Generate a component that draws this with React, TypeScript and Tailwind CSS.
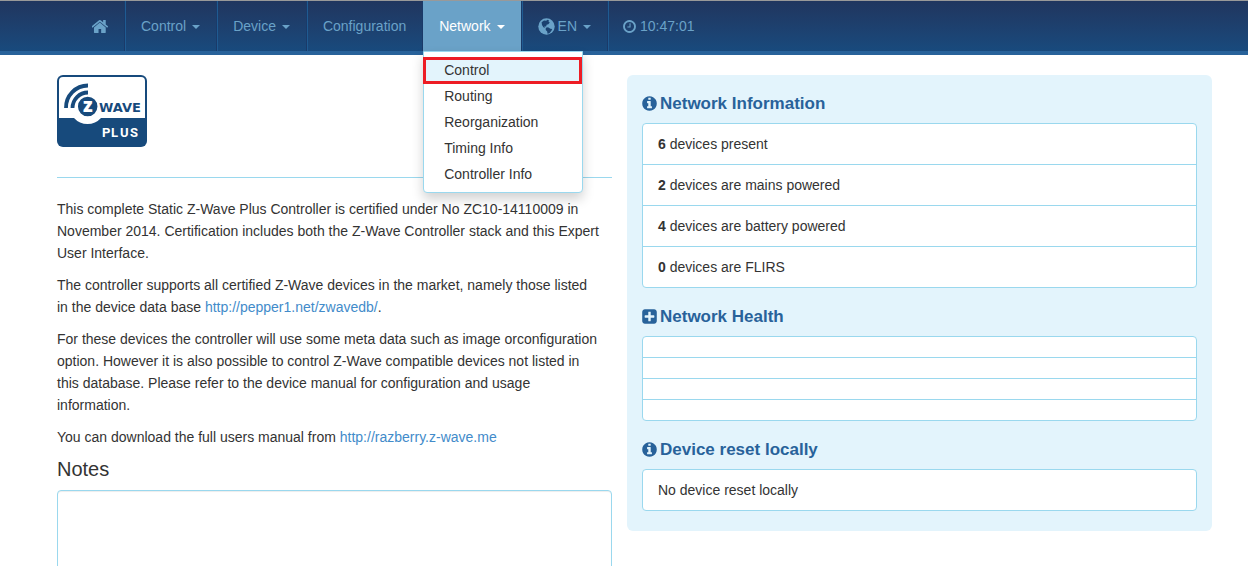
import type { ReactNode } from "react";

const FA_CIRCLE =
  "M1664 896q0 209-103 385.5t-279.5 279.5-385.5 103-385.5-103-279.5-279.5-103-385.5 103-385.5 279.5-279.5 385.5-103 385.5 103 279.5 279.5 103 385.5z";

function Icon({ d, className, viewBox = "128 0 1536 1792" }: { d: string; className: string; viewBox?: string }) {
  return (
    <svg viewBox={viewBox} fill="currentColor" fillRule="evenodd" className={className} aria-hidden="true">
      <path d={d} />
    </svg>
  );
}

const HOME =
  "M1408 992v480q0 26-19 45t-45 19h-384v-384h-256v384h-384q-26 0-45-19t-19-45v-480q0-1 .5-3t.5-3l575-474 575 474q1 2 1 6zm223-69l-62 74q-8 9-21 11h-3q-13 0-21-7l-692-577-692 577q-12 8-24 7-13-2-21-11l-62-74q-8-10-7-23.5t11-21.5l719-599q32-26 76-26t76 26l244 204v-195q0-14 9-23t23-9h192q14 0 23 9t9 23v408l219 182q10 8 11 21.5t-7 23.5z";
const CLOCK =
  "M1024 544v448q0 14-9 23t-23 9h-320q-14 0-23-9t-9-23v-64q0-14 9-23t23-9h224v-352q0-14 9-23t23-9h64q14 0 23 9t9 23zM1440 896q0-148-73-273t-198-198-273-73-273 73-198 198-73 273 73 273 198 198 273 73 273-73 198-198 73-273z" +
  FA_CIRCLE;
const INFO =
  "M1152 1376v-160q0-14-9-23t-23-9h-96v-512q0-14-9-23t-23-9h-320q-14 0-23 9t-9 23v160q0 14 9 23t23 9h96v320h-96q-14 0-23 9t-9 23v160q0 14 9 23t23 9h448q14 0 23-9t9-23zM1024 480v-160q0-14-9-23t-23-9h-192q-14 0-23 9t-9 23v160q0 14 9 23t23 9h192q14 0 23-9t9-23z" +
  FA_CIRCLE;
const PLUS =
  "M1408 960v-128q0-26-19-45t-45-19h-320v-320q0-26-19-45t-45-19h-128q-26 0-45 19t-19 45v320h-320q-26 0-45 19t-19 45v128q0 26 19 45t45 19h320v320q0 26 19 45t45 19h128q26 0 45-19t19-45v-320h320q26 0 45-19t19-45zm256-544v960q0 119-84.5 203.5t-203.5 84.5h-960q-119 0-203.5-84.5t-84.5-203.5v-960q0-119 84.5-203.5t203.5-84.5h960q119 0 203.5 84.5t84.5 203.5z";

function Globe() {
  return (
    <svg viewBox="0 0 17 17" className="mr-[3px] size-[17px]" aria-hidden="true">
      <circle cx="8.5" cy="8.5" r="8.2" fill="currentColor" />
      <path
        d="M3.6 4.2L6 2.4l2.200.3 1.200-.9 1.700.7-.6 1.300 1.300.8-1.500 1.600-1.700.6-.5 1.600-1.800.2.6 1.500-1.500-.9-1.400-2.200zM7.800 9.800l2.200-.5 2.400 1.400 1.800.4-.9 2-1.900 2.100-1.900.6-.3-2.200-1.500-1.600z"
        fill="#1b4170"
      />
    </svg>
  );
}

function Caret() {
  return <span className="ml-[6px] mt-[2px] border-x-4 border-t-4 border-x-transparent border-t-current" />;
}

function NavItem({ children, active = false }: { children: ReactNode; active?: boolean }) {
  const base = "flex h-[50px] items-center border-l border-r pl-[15px] pr-4 ";
  const tone = active
    ? "border-l-[#6aa2c8] border-r-[#1a3a69] bg-[#6aa2c8] text-white"
    : "border-l-[#1f5b92] border-r-[#1a3a69] text-[#6aa2c8]";
  return (
    <button type="button" className={base + tone}>
      {children}
    </button>
  );
}

function Logo() {
  return (
    <svg viewBox="0 0 90 72" className="h-[72px] w-[90px]" role="img" aria-label="Z-Wave Plus">
      <rect width="90" height="72" rx="6" fill="#174a7c" />
      <path d="M6 2h78q4 0 4 4v37H44a18 18 0 0 1-27 0H2V6q0-4 4-4z" fill="#fff" />
      <g fill="none" stroke="#174a7c" strokeWidth="3.8">
        <path d="M9 33A22 22 0 0 1 31 10.5" />
        <path d="M15.5 33A15.500 15.500 0 0 1 31 17.500" />
      </g>
      <circle cx="30.7" cy="31.5" r="10.5" fill="#174a7c" stroke="#fff" strokeWidth="1.5" />
      <text x="30.7" y="37" textAnchor="middle" fontSize="19" className="fill-white font-['Open_Sans'] font-extrabold">z</text>
      <text x="42" y="37" fontSize="13" className="fill-[#174a7c] font-['DejaVu_Sans'] font-bold">WAVE</text>
      <text x="45 54 63 73" y="62" fontSize="13" className="fill-white font-['Roboto'] font-bold">PLUS</text>
    </svg>
  );
}

function Section({ icon, title, children }: { icon: string; title: string; children: ReactNode }) {
  return (
    <section>
      <h2 className="mb-[6px] flex h-[26px] items-center gap-[3px] text-[17px] font-bold text-[#28629a]">
        <Icon d={icon} className="mb-[2px] h-[17px] w-[15px]" />
        {title}
      </h2>
      <ul className="mb-4 divide-y divide-[#9ad8ee] rounded border border-[#9ad8ee] bg-white">{children}</ul>
    </section>
  );
}

const DEVICES = [
  ["6", "devices present"],
  ["2", "devices are mains powered"],
  ["4", "devices are battery powered"],
  ["0", "devices are FLIRS"],
];

export default function App() {
  return (
    <div className="h-screen overflow-hidden bg-white font-['Liberation_Sans',Arial,sans-serif] text-[14px] leading-[22px] text-[#333]">
      <header className="border-b-4 border-t border-b-[#28629a] border-t-[#999] bg-linear-to-b from-[#20365f] to-[#184a7d]">
        <nav className="flex pl-[77px]">
          <a href="#home" aria-label="Home" className="flex h-[50px] items-center border-r border-r-[#1a3a69] px-[15px] text-[#6aa2c8]">
            <Icon d={HOME} viewBox="64 0 1664 1792" className="h-[19px] w-[17px]" />
          </a>
          <NavItem>Control<Caret /></NavItem>
          <NavItem>Device<Caret /></NavItem>
          <NavItem>Configuration</NavItem>
          <div className="relative">
            <NavItem active>Network<Caret /></NavItem>
            <ul className="absolute left-0 top-full z-10 w-[160px] rounded-b border border-[#9ad8ee] bg-white py-[5px] shadow-[0_6px_12px_rgba(0,0,0,0.18)]">
              <li>
                <a href="#control" className="-mb-px -ml-px block border-[3px] border-[#ed1c24] bg-[#e3f4fc] pl-[18px] leading-[21px]">Control</a>
              </li>
              {["Routing", "Reorganization", "Timing Info", "Controller Info"].map((label) => (
                <li key={label}>
                  <a href="#network" className="block px-5 leading-[26px]">{label}</a>
                </li>
              ))}
            </ul>
          </div>
          <NavItem><Globe />EN<Caret /></NavItem>
          <div className="flex items-center border-l border-l-[#1f5b92] px-[14px] text-[#6aa2c8]">
            <Icon d={CLOCK} className="mr-1 h-[15px] w-[13px]" />10:47:01
          </div>
        </nav>
      </header>

      <main className="grid grid-cols-2 pl-[42px] pr-9 pt-5">
        <div className="px-[15px]">
          <Logo />
          <hr className="mb-5 mt-[30px] border-[#9ad8ee]" />
          <div className="space-y-[10px] pr-3">
            <p>
              This complete Static Z-Wave Plus Controller is certified under No ZC10-14110009 in November 2014. Certification includes both the Z-Wave Controller stack and this Expert User Interface.
            </p>
            <p>
              The controller supports all certified Z-Wave devices in the market, namely those listed in the device data base <a href="#zwavedb" className="text-[#428bca]">http://pepper1.net/zwavedb/</a>.
            </p>
            <p>
              For these devices the controller will use some meta data such as image orconfiguration option. However it is also possible to control Z-Wave compatible devices not listed in this database. Please refer to the device manual for configuration and usage information.
            </p>
            <p>
              You can download the full users manual from <a href="#manual" className="text-[#428bca]">http://razberry.z-wave.me</a>
            </p>
          </div>
          <label htmlFor="notes" className="my-[10px] block text-[20px]">Notes</label>
          <textarea id="notes" className="block h-[200px] w-full resize-none rounded border border-[#9ad8ee] bg-white p-3 shadow-[inset_0_1px_1px_rgba(0,0,0,0.075)]" />
        </div>

        <aside className="self-start rounded-md bg-[#e3f4fc] px-[15px] pb-1 pt-4">
          <Section icon={INFO} title="Network Information">
            {DEVICES.map(([count, text]) => (
              <li key={text} className="px-[15px] py-[9px]"><b>{count}</b> {text}</li>
            ))}
          </Section>
          <Section icon={PLUS} title="Network Health">
            {[1, 2, 3, 4].map((n) => (
              <li key={n} className="py-[10px]" />
            ))}
          </Section>
          <Section icon={INFO} title="Device reset locally">
            <li className="px-[15px] py-[9px]">No device reset locally</li>
          </Section>
        </aside>
      </main>
    </div>
  );
}
